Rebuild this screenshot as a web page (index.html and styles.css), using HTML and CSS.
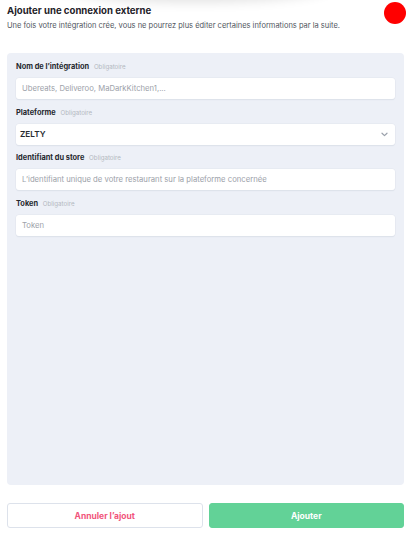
FILE: index.html
```html
<!DOCTYPE html>
<html lang="fr">
<head>
<meta charset="utf-8">
<link rel="stylesheet" href="styles.css">
</head>
<body>
<div class="top-shadow"></div>
<div class="page">
  <header class="header">
    <div class="header-text">
      <h1 class="title">Ajouter une connexion externe</h1>
      <p class="subtitle">Une fois votre intégration crée, vous ne pourrez plus éditer certaines informations par la suite.</p>
    </div>
    <span class="dot"></span>
  </header>
  <section class="panel">
    <div class="field">
      <label class="label">Nom de l’intégration <span class="req">Obligatoire</span></label>
      <div class="input placeholder">Ubereats, Deliveroo, MaDarkKitchen1,...</div>
    </div>
    <div class="field">
      <label class="label">Plateforme <span class="req">Obligatoire</span></label>
      <div class="input select"><span class="value">ZELTY</span>
        <svg class="chev" width="7" height="5" viewBox="0 0 7 5"><path d="M1 1.2 L3.5 3.6 L6 1.2" fill="none" stroke="#9aa1ab" stroke-width="1.2" stroke-linecap="round" stroke-linejoin="round"/></svg>
      </div>
    </div>
    <div class="field">
      <label class="label">Identifiant du store <span class="req">Obligatoire</span></label>
      <div class="input placeholder">L’identifiant unique de votre restaurant sur la plateforme concernée</div>
    </div>
    <div class="field">
      <label class="label">Token <span class="req">Obligatoire</span></label>
      <div class="input placeholder">Token</div>
    </div>
  </section>
  <div class="actions">
    <button class="btn btn-cancel">Annuler l’ajout</button>
    <button class="btn btn-add">Ajouter</button>
  </div>
</div>
</body>
</html>
```
FILE: styles.css
```css
* { box-sizing: border-box; }
html, body { margin: 0; padding: 0; background: #ffffff; }
body {
  font-family: Inter, "Noto Sans", "Liberation Sans", sans-serif;
  color: #22252b;
  width: 416px;
  height: 539px;
  overflow: hidden;
  position: relative;
}
.top-shadow {
  position: absolute;
  left: 60px;
  width: 270px;
  top: -30px;
  height: 30px;
  border-radius: 50%;
  box-shadow: 0 2px 12px rgba(0,0,0,0.12);
}
.page { padding: 0 12px 0 7px; }
.header {
  display: flex;
  justify-content: space-between;
  align-items: flex-start;
  padding-top: 4px;
}
.title {
  margin: 0;
  font-size: 9.6px;
  line-height: 14px;
  font-weight: 700;
  color: #1f2229;
}
.subtitle {
  margin: 3px 0 0 0;
  font-size: 7.5px;
  line-height: 10px;
  color: #50555e;
}
.dot {
  width: 22px;
  height: 22px;
  border-radius: 50%;
  background: #ff0000;
  margin-top: -2px;
  margin-right: -2px;
  flex: none;
}
.panel {
  margin-top: 22px;
  height: 432px;
  background: #edf0f7;
  border-radius: 4px;
  padding: 8px 9px;
  display: flex;
  flex-direction: column;
}
.field { display: flex; flex-direction: column; margin-bottom: 7.6px; }
.label {
  font-size: 7.4px;
  line-height: 12px;
  font-weight: 700;
  color: #25282e;
  margin-bottom: 5px;
}
.req {
  font-size: 6.2px;
  font-weight: 400;
  color: #b3b8c0;
  margin-left: 3px;
}
.input {
  height: 21px;
  background: #ffffff;
  border-radius: 3px;
  box-shadow: 0 0 0 0.5px #e2e6ee, 0 1px 1px rgba(180,188,200,0.35);
  padding: 0 6px;
  display: flex;
  align-items: center;
  font-size: 7.7px;
}
.placeholder { color: #9ca1a9; }
.select { justify-content: space-between; padding-left: 4px; }
.value { color: #262a30; font-weight: 600; font-size: 8.2px; }
.chev { margin-right: 1px; }
.actions {
  display: flex;
  gap: 6px;
  margin-top: 18px;
}
.btn {
  flex: 1;
  height: 25px;
  border-radius: 3px;
  font-family: inherit;
  font-size: 8.5px;
  font-weight: 700;
  cursor: pointer;
}
.btn-cancel {
  background: #ffffff;
  border: 1px solid #dde2eb;
  color: #f1547b;
}
.btn-add {
  background: #62d297;
  border: 1px solid #62d297;
  color: #ffffff;
}
```
